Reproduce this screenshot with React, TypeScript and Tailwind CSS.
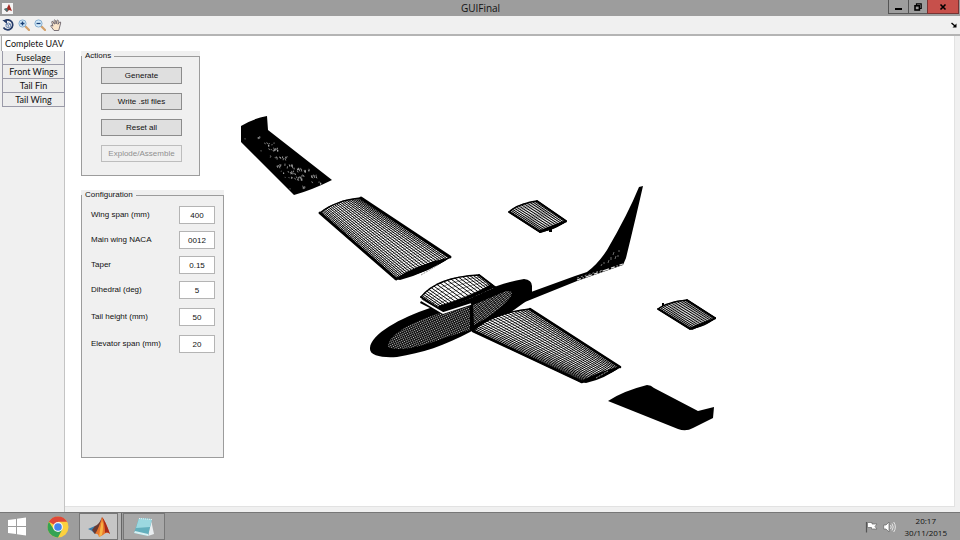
import React from "react";

type Pt = [number, number];
type Curve = [Pt, Pt, Pt];

const bez = ([a, b, c]: Curve, t: number): Pt => {
  const s = 1 - t;
  return [
    s * s * a[0] + 2 * s * t * b[0] + t * t * c[0],
    s * s * a[1] + 2 * s * t * b[1] + t * t * c[1],
  ];
};

const at = (root: Curve, tip: Curve, u: number, v: number): Pt => {
  const p = bez(root, u);
  const q = bez(tip, u);
  return [p[0] + (q[0] - p[0]) * v, p[1] + (q[1] - p[1]) * v];
};

const fmt = (p: Pt) => `${p[0].toFixed(1)} ${p[1].toFixed(1)}`;

// Wire-frame surface stretched between a root and a tip section.
// Spars crowd towards the leading and trailing edges, as on an airfoil mesh.
function Surface({ root, tip, ribs, spars, edge }: { root: Curve; tip: Curve; ribs: number; spars: number; edge: number }) {
  let span = "";
  for (let i = 0; i <= spars; i++) {
    const t = i / spars;
    const u = 0.6 * t + 0.2 * (1 - Math.cos(Math.PI * t));
    span += `M${fmt(at(root, tip, u, 0))}L${fmt(at(root, tip, u, 1))}`;
  }
  let chord = "";
  for (let j = 0; j <= ribs; j++) {
    const v = j / ribs;
    chord += `M${fmt(at(root, tip, 0, v))}`;
    for (let k = 1; k <= 8; k++) chord += `L${fmt(at(root, tip, k / 8, v))}`;
  }
  let outline = `M${fmt(root[0])}`;
  for (let k = 1; k <= 8; k++) outline += `L${fmt(bez(root, k / 8))}`;
  for (let k = 8; k >= 0; k--) outline += `L${fmt(bez(tip, k / 8))}`;
  outline += "Z";
  return (
    <g fill="none" stroke="#000">
      <path d={outline} fill="#fff" strokeWidth="1.4" strokeLinejoin="round" />
      <path d={span} strokeWidth="1" />
      <path d={chord} strokeWidth="0.4" />
      <path d={`M${fmt(root[0])}L${fmt(tip[0])}M${fmt(root[2])}L${fmt(tip[2])}`} strokeWidth={edge} strokeLinecap="round" />
    </g>
  );
}

// Clusters of gaps where the dense mesh lets the background through.
function Speckles({ spots, size }: { spots: Pt[]; size: number }) {
  let d = "";
  let seed = 7;
  const rnd = () => {
    seed = (seed * 16807) % 2147483647;
    return seed / 2147483647;
  };
  spots.forEach(([x, y]) => {
    for (let i = 0; i < size; i++) {
      const px = x + (rnd() - 0.5) * 18;
      const py = y + (rnd() - 0.5) * 3;
      d += `M${px.toFixed(1)} ${py.toFixed(1)}l${(rnd() * 1.4 - 0.3).toFixed(1)} ${(0.8 + rnd() * 1.6).toFixed(1)}`;
    }
  });
  return <path d={d} stroke="#bbb" strokeWidth="0.7" fill="none" />;
}

function Aircraft() {
  return (
    <svg viewBox="230 105 500 335" className="mt-[69px] h-[335px] w-[500px] shrink-0" role="img" aria-label="UAV mesh">
      <defs>
        <pattern id="weave" width="2" height="2" patternUnits="userSpaceOnUse" patternTransform="rotate(-24)">
          <rect width="1.1" height="1.1" fill="#c4c4c4" />
        </pattern>
        <pattern id="rows" width="3" height="1.7" patternUnits="userSpaceOnUse" patternTransform="rotate(-38)">
          <rect width="2.4" height="0.8" fill="#b4b4b4" />
        </pattern>
      </defs>

      <path d="M241 126Q252 119 267 116L268 130L332 180Q312 190 294 195L241 142Z" />
      <Speckles size={4} spots={[[254, 137], [261, 144], [268, 143]]} />
      <Speckles size={14} spots={[[270, 149], [278, 157], [285, 165], [289, 172], [300, 169], [294, 178], [308, 176]]} />
      <Speckles size={5} spots={[[299, 187], [313, 182]]} />

      <Surface root={[[320, 213], [336, 200], [361, 198]]} tip={[[396, 279], [425, 273], [450, 257]]} ribs={42} spars={24} edge={2.8} />
      <path d="M394 279Q420 263 451 257Q429 272 400 280Z" />
      <path d="M421 275L438 265" stroke="#999" strokeWidth="1" strokeDasharray="2 1" />

      <Surface root={[[509, 212], [517, 204], [537, 201]]} tip={[[540, 232], [555, 229], [566, 221]]} ribs={20} spars={13} edge={1.8} />
      <path d="M538 231L566 220L567 222L552 229V232H549V230L540 233Z" />

      <path d="M510 308L577 281L623 265L626 258Q636 217 643 186L639 187Q628 214 607 250Q598 264 587 272L575 276L520 296Z" />
      <path d="M577 280L623 264" stroke="#ddd" strokeWidth="1.3" strokeDasharray="4 2 1 2 7 2" />
      <path d="M577 278L603 270" stroke="#aaa" strokeWidth="0.8" strokeDasharray="2 2" />
      <path d="M601 266l1-2M604 264v-2M608 263l1-3M611 260v-3M615 259l1-3M618 257v-2M613 255l1-3M619 252v-2" stroke="#999" strokeWidth="0.7" />

      <path d="M370 348C371 334 400 318 430 308L497 286Q512 281 524 279Q532 280 532 286L532 292L525 302L507 315L472 331C444 346 422 353 397 357C382 358 369 356 370 348Z" />
      <path d="M388 347C388 334 412 322 440 313L470 306V330L447 337C425 345 402 353 388 347Z" fill="url(#weave)" />
      <path d="M473 305Q492 297 506 291Q516 290 509 299Q496 314 474 325Z" fill="url(#rows)" />
      <path d="M470 304L472 331" stroke="#000" strokeWidth="1.5" />

      <Surface root={[[421, 297], [437, 277], [479, 275]]} tip={[[442, 311], [468, 300], [496, 288]]} ribs={6} spars={20} edge={2} />
      <path d="M442 311L496 287L491 284Q470 297 438 306Z" />
      <path d="M421 301L443 312L471 303" fill="none" stroke="#000" strokeWidth="4.5" />
      <path d="M421 300L443 313L471 304" fill="none" stroke="#fff" strokeWidth="1.7" />

      <Surface root={[[473, 331], [492, 313], [530, 309]]} tip={[[582, 382], [602, 378], [620, 367]]} ribs={38} spars={23} edge={2.5} />
      <path d="M580 382Q594 373 621 366Q605 379 586 383Z" />
      <path d="M596 378L608 371" stroke="#999" strokeDasharray="2 1" />

      <Surface root={[[658, 309], [667, 302], [687, 300]]} tip={[[690, 329], [705, 326], [715, 318]]} ribs={20} spars={13} edge={1.8} />
      <path d="M662 303h2v3h-2zM689 328L716 317V319L692 330Z" />

      <path d="M608 401Q623 391 647 385Q651 385 654 388L698 411L714 407L713 418L693 428Q686 432 678 429Z" />
    </svg>
  );
}

function MatlabLogo({ className }: { className: string }) {
  return (
    <svg viewBox="0 0 24 22" className={className} aria-hidden="true">
      <path d="M1 13L8 10L12 14L8 18Q5 14 1 13Z" fill="#3a7fae" />
      <path d="M8 10Q12 9 15 1L13 14L8 18L5 14Z" fill="#6b3a32" />
      <path d="M8 18Q12 12 15 1Q18 4 23 18Q20 15 16 19L12 21Q11 17 8 18Z" fill="#e8762b" />
      <path d="M15 1Q18 4 23 18Q20 15 18 17Q18 8 15 1Z" fill="#a82a1c" />
      <path d="M15 4Q17 11 15 19L12 21Q13 13 15 4Z" fill="#f8b444" />
    </svg>
  );
}

function Magnifier({ plus }: { plus: boolean }) {
  return (
    <svg viewBox="0 0 12 12" className="size-3" aria-hidden="true">
      <path d="M7 7L11 11" stroke="#d2a06a" strokeWidth="2.2" strokeLinecap="round" />
      <circle cx="4.5" cy="4.5" r="3.6" fill="#d4ebfa" stroke="#86aed0" />
      <path d={plus ? "M2.5 4.5h4M4.5 2.5v4" : "M2.5 4.5h4"} stroke="#173f77" strokeWidth="1.3" />
    </svg>
  );
}

const tabs = ["Fuselage", "Front Wings", "Tail Fin", "Tail Wing"];
const actions = ["Generate", "Write .stl files", "Reset all"];
const wingFields = [
  ["Wing span (mm)", "400"],
  ["Main wing NACA", "0012"],
  ["Taper", "0.15"],
  ["Dihedral (deg)", "5"],
];
const tailFields = [
  ["Tail height (mm)", "50"],
  ["Elevator span (mm)", "20"],
];

function Field({ label, value }: { label: string; value: string }) {
  return (
    <label className="flex h-[18px] items-center justify-between">
      <span>{label}</span>
      <input defaultValue={value} className="h-[18px] w-9 border border-[#b4b4b4] bg-white text-center" />
    </label>
  );
}

export default function App() {
  return (
    <div className="flex min-h-screen flex-col bg-[#f0f0f0] font-['Open_Sans','Noto_Sans',sans-serif] text-[#111]">
      <header className="flex h-4 items-start bg-[#9d9d9d]">
        <div className="flex h-4 flex-1 items-center pl-[2px]">
          <span className="flex size-[11px] items-center justify-center bg-[#f4f4f4]">
            <svg viewBox="0 0 10 10" className="size-[10px]" aria-hidden="true">
              <path d="M1 6L4 5L6 1L9 8L6 7L4 9Z" fill="#a32b25" />
              <path d="M1 6L4 5L5 7L4 9Z" fill="#477" />
            </svg>
          </span>
        </div>
        <h1 className="text-[10px] leading-4">GUIFinal</h1>
        <div className="flex h-[14px] flex-1 justify-end pr-px">
          <button aria-label="Minimize" className="flex w-[21px] items-center justify-center border border-t-0 border-[#555]">
            <span className="mt-1 h-[2px] w-[7px] bg-black" />
          </button>
          <button aria-label="Restore" className="flex w-[18px] items-center justify-center border-b border-[#555]">
            <svg viewBox="0 0 8 8" className="size-2" fill="none" stroke="#000" aria-hidden="true">
              <path d="M2.5 2V.8H7.2V5.5H6" strokeWidth="1.2" />
              <rect x="1" y="2.8" width="4.4" height="4.2" strokeWidth="1.6" />
            </svg>
          </button>
          <button aria-label="Close" className="flex w-8 items-center justify-center border border-t-0 border-[#733] bg-[#c7504b]">
            <svg viewBox="0 0 8 8" className="size-2" aria-hidden="true">
              <path d="M1.5 1.5L6.5 6.5M6.5 1.5L1.5 6.5" stroke="#000" strokeWidth="1.6" />
            </svg>
          </button>
        </div>
      </header>

      <div className="flex h-5 items-center gap-1 border-b-2 border-[#b4b4b4] pl-[2px] pr-[3px]">
        <button aria-label="Rotate 3D">
          <svg viewBox="0 0 12 12" className="size-3" fill="none" aria-hidden="true">
            <path d="M2.2 2.2A5 5 0 1 1 1.5 8.5" stroke="#253b68" strokeWidth="1.7" />
            <path d="M.3 1H5V5Z" fill="#253b68" />
            <path d="M4 5L6.5 4L8.5 5V7.7L6.3 8.8L4 7.7ZM4 5L6.3 6L8.5 5M6.3 6V8.8" stroke="#5775a6" strokeWidth=".8" />
          </svg>
        </button>
        <button aria-label="Zoom in"><Magnifier plus /></button>
        <button aria-label="Zoom out"><Magnifier plus={false} /></button>
        <button aria-label="Pan">
          <svg viewBox="0 0 12 12" className="size-3" aria-hidden="true">
            <path d="M4 11.5L.8 7.2Q.6 5.8 2 6.4L3 7.2L1.7 3Q2 1.6 3 2.7L4.4 5.2L4 1.5Q4.8.1 5.5 1.5L6.1 5L6.9 1.4Q7.8.4 8.3 1.7L8 5.3L9.6 3Q10.8 2.5 10.7 4L9.4 9L8.7 11.5Z" fill="#fbe6cb" stroke="#5d5560" strokeWidth=".8" />
          </svg>
        </button>
        <button aria-label="Dock figure" className="ml-auto">
          <svg viewBox="0 0 6 6" className="size-[6px]" aria-hidden="true">
            <path d="M.5 1L4 4" stroke="#000" strokeWidth="1.4" />
            <path d="M5.5 1.5V5.5H1.5Z" />
          </svg>
        </button>
      </div>

      <div className="flex flex-1">
        <nav className="flex w-[65px] flex-col pl-px font-['Lato','Open_Sans',sans-serif] text-[9px]">
          <button className="h-[15px] border-l border-[#aaa] bg-white pl-[3px] text-left">Complete UAV</button>
          {tabs.map((t) => (
            <button key={t} className="ml-px h-[14px] border-b border-l border-r border-[#9a9aa8] bg-[#ededed]">
              {t}
            </button>
          ))}
          <div className="flex-1 border-r border-[#c4c4c4]" />
        </nav>

        <main className="mb-[5px] mr-[5px] flex flex-1 items-start gap-[6px] border-b border-r border-[#e2e2e2] bg-white pl-4 font-['Liberation_Sans',Arial,sans-serif] text-[8px]">
          <div className="w-[143px] shrink-0 pt-[15px]">
            <section className="w-[119px] bg-[#f0f0f0]">
              <fieldset className="h-[125px] border border-[#9c9c9c]">
                <legend className="px-[3px] leading-[10px]">Actions</legend>
                <div className="flex flex-col gap-[9px] pl-[19px] pr-[17px] pt-[6px]">
                  {actions.map((a) => (
                    <button key={a} className="h-[17px] border border-[#8c8c8c] bg-[#dfdfdf]">{a}</button>
                  ))}
                  <button disabled className="h-[17px] border border-[#bdbdbd] bg-[#efefef] text-[#909090]">Explode/Assemble</button>
                </div>
              </fieldset>
            </section>
            <section className="mt-[14px] bg-[#f0f0f0]">
              <fieldset className="h-[268px] border border-[#9c9c9c]">
                <legend className="px-[3px] leading-[10px]">Configuration</legend>
                <div className="flex flex-col gap-[9px] pl-[9px] pr-2 pt-[6px]">
                  <div className="flex flex-col gap-[7px]">
                    {wingFields.map(([l, v]) => <Field key={l} label={l} value={v} />)}
                  </div>
                  {tailFields.map(([l, v]) => <Field key={l} label={l} value={v} />)}
                </div>
              </fieldset>
            </section>
          </div>
          <Aircraft />
        </main>
      </div>

      <footer className="flex h-7 items-stretch border-t border-[#777] bg-[#9d9d9d]">
        <button aria-label="Start" className="flex w-[37px] items-center pl-2">
          <svg viewBox="0 0 19 19" className="size-[19px]" fill="#fff" aria-hidden="true">
            <path d="M0 3L8 2V9H0ZM9 1.8L18 .5V9H9ZM0 10H8V17L0 16ZM9 10H18V18.5L9 17.2Z" />
          </svg>
        </button>
        <button aria-label="Chrome" className="flex w-[42px] items-center justify-center">
          <svg viewBox="0 0 22 22" className="size-[22px]" aria-hidden="true">
            <circle cx="11" cy="11" r="10.5" fill="#fbd03f" />
            <path d="M11 11L1.9 5.8A10.5 10.5 0 0 1 20.1 5.8H11Z" fill="#df4839" />
            <path d="M11 11L6.8 13.5L1.9 5.8A10.5 10.5 0 0 0 11 21.5L15.2 13.5Z" fill="#34a353" />
            <circle cx="11" cy="11" r="4.9" fill="#f4f4f4" />
            <circle cx="11" cy="11" r="3.8" fill="#4384ef" />
          </svg>
        </button>
        <button aria-label="MATLAB" className="flex w-[39px] items-center justify-center border border-[#777] bg-[#c6c6c6]">
          <MatlabLogo className="h-[22px] w-6" />
        </button>
        <span className="mr-px w-1 border-r border-[#666] bg-[#b4b4b4]" />
        <button aria-label="Notepad" className="flex w-[42px] items-center justify-center border border-[#777] bg-[#a8a8a8]">
          <svg viewBox="0 0 22 20" className="h-5 w-[22px]" aria-hidden="true">
            <path d="M18 3L21 17L15 19Z" fill="#e9eef0" />
            <path d="M6 1L19 2L15 19L1 16Z" fill="#63afbd" />
            <path d="M6 1L19 2L17 10L3 11Z" fill="#9cd8e0" />
            <path d="M1 16L15 19V17L2 14Z" fill="#d8f0f2" />
            <path d="M6 1.5L19 2.5" stroke="#eee" strokeDasharray="1 1" />
          </svg>
        </button>
        <div className="ml-auto flex items-center gap-[5px] pr-[13px]">
          <svg viewBox="0 0 13 12" className="h-3 w-[13px]" aria-hidden="true">
            <path d="M1.5 1V11.5" stroke="#555" strokeWidth="1.2" />
            <path d="M2.5 1.5H7V3H12L10 5.5L12 8H6.5V6.5H2.5Z" fill="#fff" stroke="#666" strokeWidth=".7" />
          </svg>
          <svg viewBox="0 0 13 12" className="h-3 w-[13px]" aria-hidden="true">
            <path d="M.7 4H3L6 1V11L3 8H.7Z" fill="#fff" stroke="#666" strokeWidth=".7" />
            <path d="M7.5 4Q9 6 7.5 8M9 2.5Q11.5 6 9 9.5M10.7 1Q14 6 10.7 11" fill="none" stroke="#eee" strokeWidth=".9" />
          </svg>
          <time className="ml-1 text-center text-[8px] leading-3">20:17<br />30/11/2015</time>
        </div>
      </footer>
    </div>
  );
}
